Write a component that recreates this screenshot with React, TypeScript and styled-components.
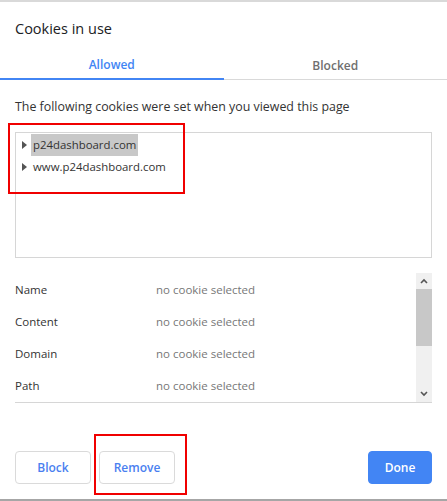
import styled, { createGlobalStyle } from "styled-components";

const GlobalStyle = createGlobalStyle`
    html, body {
        margin: 0;
        padding: 0;
        background: #ffffff;
    }
    body {
        font-family: "Open Sans", "Noto Sans", Arial, sans-serif;
        color: #202124;
    }
`;

const Dialog = styled.div`
    position: relative;
    width: 447px;
    height: 501px;
    box-sizing: border-box;
    border-top: 2px solid #d9d9d9;
    border-bottom: 2px solid #a6a6a6;
    background: #ffffff;
    display: flex;
    flex-direction: column;
`;

const Title = styled.h1`
    margin: 0;
    padding: 17px 15px 0;
    height: 31px;
    font-size: 14.5px;
    font-weight: 400;
    color: #202124;
`;

const Tabs = styled.div`
    display: flex;
    height: 30px;
`;

const Tab = styled.div<{ $active?: boolean }>`
    flex: 1;
    display: flex;
    align-items: center;
    justify-content: center;
    font-size: 12px;
    font-weight: 600;
    color: ${(p) => (p.$active ? "#4285f4" : "#6f6f6f")};
    border-bottom: ${(p) => (p.$active ? "2px solid #4285f4" : "1px solid #d9d9d9")};
    box-sizing: border-box;
    padding-top: ${(p) => (p.$active ? "0" : "1px")};
`;

const Body = styled.div`
    padding: 0 15px;
    display: flex;
    flex-direction: column;
`;

const Intro = styled.p`
    margin: 17px 0 0;
    height: 19px;
    font-size: 12.4px;
    line-height: 19px;
    color: #333333;
`;

const TreeBox = styled.div`
    margin-top: 16px;
    height: 126px;
    border: 1px solid #d6d6d6;
    box-sizing: border-box;
    padding: 1px 0 0 4px;
`;

const TreeRow = styled.div`
    display: flex;
    align-items: center;
    height: 22px;
    font-size: 11.4px;
    color: #333333;
`;

const Arrow = styled.span`
    width: 0;
    height: 0;
    border-top: 4px solid transparent;
    border-bottom: 4px solid transparent;
    border-left: 5px solid #555555;
    margin: 0 6px 0 2px;
`;

const TreeLabel = styled.span<{ $selected?: boolean }>`
    background: ${(p) => (p.$selected ? "#c8c8c8" : "transparent")};
    height: 22px;
    line-height: 22px;
    padding: 0 2px;
    margin-left: -2px;
`;

const Details = styled.div`
    margin-top: 15px;
    height: 130px;
    border-bottom: 1px solid #d6d6d6;
    box-sizing: border-box;
    display: flex;
`;

const DetailList = styled.div`
    flex: 1;
    display: flex;
    flex-direction: column;
`;

const DetailRow = styled.div`
    height: 32px;
    display: flex;
    align-items: center;
    font-size: 11.5px;
`;

const DetailKey = styled.span`
    width: 141px;
    color: #333333;
`;

const DetailValue = styled.span`
    color: #777777;
`;

const Scrollbar = styled.div`
    width: 16px;
    background: #f0f0f0;
    display: flex;
    flex-direction: column;
`;

const ScrollArrow = styled.div`
    height: 16px;
    display: flex;
    align-items: center;
    justify-content: center;
`;

const ScrollThumb = styled.div`
    height: 57px;
    background: #c8c8c8;
`;

const ScrollTrack = styled.div`
    flex: 1;
`;

const Footer = styled.div`
    margin-top: auto;
    padding: 0 15px 15px;
    display: flex;
    gap: 8px;
`;

const Button = styled.button<{ $primary?: boolean }>`
    height: 33px;
    width: ${(p) => (p.$primary ? "64px" : "76px")};
    padding: 0;
    border-radius: 4px;
    border: 1px solid ${(p) => (p.$primary ? "#4285f4" : "#dadada")};
    background: ${(p) => (p.$primary ? "#4285f4" : "#ffffff")};
    color: ${(p) => (p.$primary ? "#ffffff" : "#4a7ff0")};
    font-family: inherit;
    font-size: 12px;
    font-weight: 600;
    cursor: pointer;
    &:last-child {
        margin-left: auto;
    }
`;

const Highlight = styled.div<{ $x: number; $y: number; $w: number; $h: number }>`
    position: absolute;
    left: ${(p) => p.$x}px;
    top: ${(p) => p.$y}px;
    width: ${(p) => p.$w}px;
    height: ${(p) => p.$h}px;
    border: 2px solid #f00000;
    box-sizing: border-box;
    pointer-events: none;
`;

const fields = ["Name", "Content", "Domain", "Path"];

function Chevron({ up }: { up?: boolean }) {
    return (
        <svg width="8" height="6" viewBox="0 0 8 6">
            <path
                d={up ? "M1 5 L4 2 L7 5" : "M1 1 L4 4 L7 1"}
                fill="none"
                stroke="#555"
                strokeWidth="1.6"
            />
        </svg>
    );
}

export default function App() {
    return (
        <>
            <GlobalStyle />
            <Dialog>
                <Title>Cookies in use</Title>
                <Tabs>
                    <Tab $active>Allowed</Tab>
                    <Tab>Blocked</Tab>
                </Tabs>
                <Body>
                    <Intro>The following cookies were set when you viewed this page</Intro>
                    <TreeBox>
                        <TreeRow>
                            <Arrow />
                            <TreeLabel $selected>p24dashboard.com</TreeLabel>
                        </TreeRow>
                        <TreeRow>
                            <Arrow />
                            <TreeLabel>www.p24dashboard.com</TreeLabel>
                        </TreeRow>
                    </TreeBox>
                    <Details>
                        <DetailList>
                            {fields.map((f) => (
                                <DetailRow key={f}>
                                    <DetailKey>{f}</DetailKey>
                                    <DetailValue>no cookie selected</DetailValue>
                                </DetailRow>
                            ))}
                        </DetailList>
                        <Scrollbar>
                            <ScrollArrow>
                                <Chevron up />
                            </ScrollArrow>
                            <ScrollThumb />
                            <ScrollTrack />
                            <ScrollArrow>
                                <Chevron />
                            </ScrollArrow>
                        </Scrollbar>
                    </Details>
                </Body>
                <Footer>
                    <Button>Block</Button>
                    <Button>Remove</Button>
                    <Button $primary>Done</Button>
                </Footer>
                <Highlight $x={8} $y={121} $w={177} $h={71} />
                <Highlight $x={94} $y={432} $w={93} $h={61} />
            </Dialog>
        </>
    );
}
